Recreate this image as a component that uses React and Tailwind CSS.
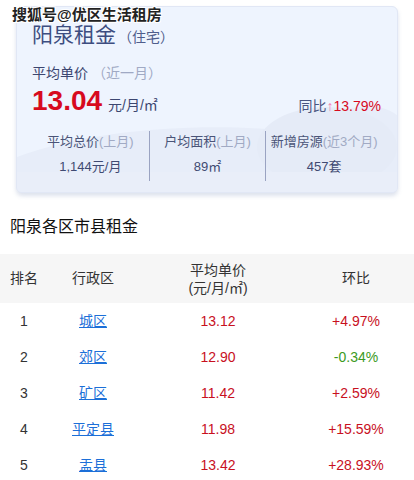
import React from 'react';

const rows = [
  { rank: 1, name: '城区', price: '13.12', change: '+4.97%', up: true },
  { rank: 2, name: '郊区', price: '12.90', change: '-0.34%', up: false },
  { rank: 3, name: '矿区', price: '11.42', change: '+2.59%', up: true },
  { rank: 4, name: '平定县', price: '11.98', change: '+15.59%', up: true },
  { rank: 5, name: '盂县', price: '13.42', change: '+28.93%', up: true },
];

const stats = [
  { label: '平均总价', note: '(上月)', value: '1,144元/月' },
  { label: '户均面积', note: '(上月)', value: '89㎡' },
  { label: '新增房源', note: '(近3个月)', value: '457套' },
];

const font = { fontFamily: '"Liberation Sans", "Noto Sans CJK SC", sans-serif' };

export default function App() {
  return (
    <div className="relative w-[414px] h-[480px] bg-white overflow-hidden" style={font}>
      {/* Summary card */}
      <div className="pt-[6px] px-[16px] pb-[14px]">
        <div className="relative overflow-hidden rounded-[6px] border border-[#e1e7f5] bg-[#eef4fe] shadow-[0_3px_4px_rgba(180,190,215,0.45)] h-[187px]">
          <svg className="absolute inset-0" width="382" height="187" viewBox="0 0 382 187">
            <path d="M0 150 C 80 120, 200 115, 280 125 C 320 100, 360 90, 382 110 L382 187 L0 187 Z" fill="#e7edf9" />
            <ellipse cx="310" cy="140" rx="70" ry="40" fill="#e5ebf7" />
            <rect x="0" y="165" width="382" height="22" fill="#e9eef9" />
          </svg>
          <div className="relative pl-[15px] pr-[15px]">
            <div className="flex items-baseline mt-[15px] h-[26px]">
              <span className="text-[21px] leading-[26px] text-[#3d4d80]">阳泉租金</span>
              <span className="text-[14px] text-[#4f5d8c] ml-[2px]">（住宅）</span>
            </div>
            <div className="mt-[16px] text-[14px] leading-[18px] text-[#3c4670]">
              平均单价 <span className="text-[#a0a9c4]">（近一月）</span>
            </div>
            <div className="flex items-end justify-between mt-[4px] h-[30px]">
              <div className="flex items-baseline">
                <span className="text-[28px] leading-[30px] font-bold text-[#d70a1e]">13.04</span>
                <span className="text-[14px] text-[#3c4670] ml-[6px]">元/月/㎡</span>
              </div>
              <div className="text-[14px] leading-[18px] mb-[1px] mr-[1px]">
                <span className="text-[#4a5580]">同比</span>
                <span className="text-[#f07ab0]">↑</span>
                <span className="text-[#d70a1e]">13.79%</span>
              </div>
            </div>
            <div className="grid grid-cols-3 mt-[15px]">
              {stats.map((s, i) => (
                <div
                  key={s.label}
                  className={`flex flex-col items-center h-[50px] ${i > 0 ? 'border-l border-[#9aa3c2]' : ''}`}
                >
                  <div className="text-[13px] leading-[16px] mt-[3px] text-[#4a5478]">
                    {s.label}
                    <span className="text-[#a1aac4]">{s.note}</span>
                  </div>
                  <div className="text-[13px] leading-[16px] mt-[9px] text-[#3f4a72]">{s.value}</div>
                </div>
              ))}
            </div>
          </div>
        </div>
      </div>

      {/* Watermark */}
      <div className="absolute left-[12px] top-[5px] text-[15px] leading-[19px] font-bold text-[#222] [text-shadow:-1px_-1px_0_#fff,1px_-1px_0_#fff,-1px_1px_0_#fff,1px_1px_0_#fff]">
        搜狐号@优区生活租房
      </div>

      <div className="px-[10px] text-[16px] leading-[20px] text-[#111] mt-[10px]">阳泉各区市县租金</div>

      {/* Table */}
      <div className="mt-[17px]">
        <div className="grid grid-cols-[48px_90px_160px_1fr] items-center h-[49px] bg-[#f6f6f6] text-[14px] text-[#333]">
          <div className="text-center">排名</div>
          <div className="text-center">行政区</div>
          <div className="text-center leading-[18px]">
            平均单价
            <br />
            (元/月/㎡)
          </div>
          <div className="text-center">环比</div>
        </div>
        {rows.map((r) => (
          <div
            key={r.rank}
            className="grid grid-cols-[48px_90px_160px_1fr] items-center h-[36px] text-[14px]"
          >
            <div className="text-center text-[#333]">{r.rank}</div>
            <div className="text-center">
              <span className="text-[#1c6fd8] underline underline-offset-1">{r.name}</span>
            </div>
            <div className="text-center text-[#c8101e]">{r.price}</div>
            <div className={`text-center ${r.up ? 'text-[#c8101e]' : 'text-[#3c9a1e]'}`}>{r.change}</div>
          </div>
        ))}
      </div>
    </div>
  );
}
